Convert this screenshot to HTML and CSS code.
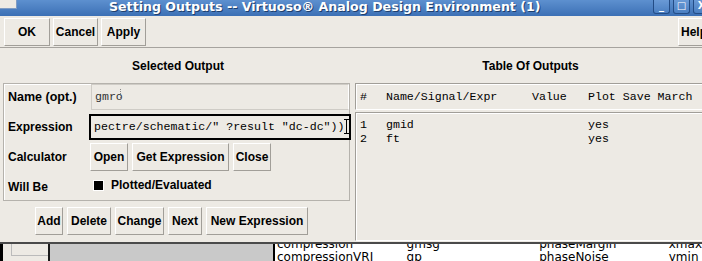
FILE: index.html
```html
<!DOCTYPE html>
<html lang="en">
<head>
    <meta charset="UTF-8">
    <title>Setting Outputs</title>
    <link rel="stylesheet" href="styles.css">
</head>
<body>
    <div class="window">
        <div class="titlebar">
            <span class="menu-box"></span>
            <span class="title">Setting Outputs -- Virtuoso&reg; Analog Design Environment (1)</span>
            <div class="wm-buttons">
                <span class="wm-btn">_</span>
                <span class="wm-btn">&#9633;</span>
                <span class="wm-btn">X</span>
            </div>
        </div>

        <div class="toolbar">
            <button class="btn tb-ok">OK</button>
            <button class="btn tb-cancel">Cancel</button>
            <button class="btn tb-apply">Apply</button>
            <button class="btn tb-help">Help</button>
        </div>

        <div class="main">
            <div class="left">
                <div class="heading">Selected Output</div>
                <div class="frame">
                    <div class="row row-name">
                        <label class="lbl">Name (opt.)</label>
                        <div class="field name-field">gmro<span class="mouse-beam"></span></div>
                    </div>
                    <div class="row row-expr">
                        <label class="lbl">Expression</label>
                        <div class="field expr-field">pectre/schematic/" ?result "dc-dc"))<span class="caret"></span></div>
                    </div>
                    <div class="row row-calc">
                        <label class="lbl">Calculator</label>
                        <div class="btn-group">
                            <button class="btn w38">Open</button>
                            <button class="btn w97">Get Expression</button>
                            <button class="btn w38">Close</button>
                        </div>
                    </div>
                    <div class="row row-will">
                        <label class="lbl">Will Be</label>
                        <div class="check"><span class="box"></span>Plotted/Evaluated</div>
                    </div>
                </div>
                <div class="actions">
                    <button class="btn w28">Add</button>
                    <button class="btn w44">Delete</button>
                    <button class="btn w49">Change</button>
                    <button class="btn w34">Next</button>
                    <button class="btn w102">New Expression</button>
                </div>
            </div>

            <div class="right">
                <div class="heading">Table Of Outputs</div>
                <div class="tbl-head">
                    <span class="c-num">#</span><span class="c-name">Name/Signal/Expr</span><span class="c-val">Value</span><span class="c-plot">Plot Save March</span>
                </div>
                <div class="tbl-body">
                    <div class="tr"><span class="c-num">1</span><span class="c-name">gmid</span><span class="c-val"></span><span class="c-plot">yes</span></div>
                    <div class="tr"><span class="c-num">2</span><span class="c-name">ft</span><span class="c-val"></span><span class="c-plot">yes</span></div>
                </div>
            </div>
        </div>

        <div class="behind">
            <div class="bh-edge"></div>
            <div class="bh-panel"><div class="bh-inner"></div></div>
            <div class="bh-gray"></div>
            <div class="bh-list">
                <div class="bh-col c1"><span>compression</span><span>compressionVRI</span></div>
                <div class="bh-col c2"><span>gmsg</span><span>gp</span></div>
                <div class="bh-col c3"><span>phaseMargin</span><span>phaseNoise</span></div>
                <div class="bh-col c4"><span>xmax</span><span>ymin</span></div>
            </div>
        </div>
    </div>
</body>
</html>
```

FILE: styles.css
```css
body {
    margin: 0;
    width: 702px;
    height: 261px;
    overflow: hidden;
    background-color: #edeae4;
    font-family: "Liberation Sans", Arial, sans-serif;
    font-size: 12px;
    font-weight: bold;
    color: #000;
}
.window {
    width: 702px;
    height: 261px;
    display: flex;
    flex-direction: column;
}
/* title bar */
.titlebar {
    height: 16px;
    flex: none;
    display: flex;
    align-items: flex-start;
    background: linear-gradient(#5d90cf, #3c70b5);
}
.menu-box {
    width: 16px;
    height: 8px;
    background-color: #edeae4;
    border-right: 1px solid #7f9cc4;
    border-bottom: 1px solid #7f9cc4;
    flex: none;
}
.title {
    margin-left: 92px;
    font-family: "DejaVu Sans", sans-serif;
    font-size: 12.6px;
    font-weight: bold;
    color: #fff;
    line-height: 13px;
    text-shadow: 1px 1px 0 #1f3f6c;
    white-space: nowrap;
}
.wm-buttons {
    margin-left: auto;
    display: flex;
    gap: 3px;
    margin-right: -8px;
}
.wm-btn {
    width: 15px;
    height: 13px;
    border: 1px solid #234c85;
    border-top: none;
    border-radius: 0 0 3px 3px;
    background: linear-gradient(#6a9ad6, #4a7fc2);
    color: #fff;
    font-family: "DejaVu Sans", sans-serif;
    font-size: 10px;
    line-height: 12px;
    text-align: center;
}

/* buttons */
.btn {
    font-family: "Liberation Sans", Arial, sans-serif;
    font-size: 12px;
    font-weight: bold;
    color: #000;
    background-color: #edeae4;
    height: 28px;
    padding: 0;
    border: 1px solid;
    border-color: #fff #a19e98 #a19e98 #fff;
    margin: 0;
    text-align: center;
    white-space: nowrap;
}
.w28 { width: 28px; }
.w34 { width: 34px; }
.w38 { width: 38px; }
.w44 { width: 44px; }
.w49 { width: 49px; }
.w97 { width: 97px; }
.w102 { width: 102px; }
.toolbar {
    height: 31px;
    flex: none;
    display: flex;
    align-items: center;
    padding-left: 4px;
    gap: 3px;
    border-bottom: 1px solid #a6a39e;
}
.tb-ok { width: 46px; }
.tb-cancel { width: 45px; }
.tb-apply { width: 45px; }
.tb-help { margin-left: auto; margin-right: -24px; width: 48px; text-align: left; padding-left: 2px; }

/* main area */
.main {
    height: 194px;
    flex: none;
    display: flex;
}
.heading {
    height: 35px;
    line-height: 36px;
    text-align: center;
}
.left {
    width: 352px;
    flex: none;
}
.left .heading {
    padding-left: 4px;
}
.frame {
    margin-left: 3px;
    width: 345px;
    height: 116px;
    border: 1px solid #b5b2ac;
    box-shadow: inset 1px 1px 0 #fff;
}
.row {
    display: flex;
    align-items: center;
}
.lbl {
    width: 85px;
    flex: none;
    padding-left: 4px;
    box-sizing: border-box;
}
.row-name {
    height: 26px;
}
.row-name .lbl { font-size: 12.5px; }
.field {
    font-family: "Liberation Mono", "DejaVu Sans Mono", monospace;
    font-weight: normal;
    font-size: 11.6px;
    white-space: nowrap;
    overflow: hidden;
    box-sizing: border-box;
}
.name-field {
    margin-left: 2px;
    width: 260px;
    height: 26px;
    line-height: 24px;
    padding-left: 3px;
    border: 1px solid #cfccc6;
    border-right-color: #fff;
    color: #333;
}
/* mouse pointer I-beam resting on the name */
.mouse-beam {
    display: inline-block;
    width: 1px;
    height: 9px;
    margin-left: -3px;
    vertical-align: 2px;
    border-left: 1px dotted #888;
}
.row-expr {
    height: 26px;
    margin-top: 4px;
}
.expr-field {
    width: 262px;
    height: 26px;
    line-height: 22px;
    padding-left: 3px;
    border: 2px solid #000;
    margin-right: -2px;
}
/* text cursor: I-beam */
.caret {
    display: inline-block;
    width: 5px;
    height: 15px;
    border-top: 1px solid #000;
    border-bottom: 1px solid #000;
    background: linear-gradient(90deg, transparent 2px, #000 2px, #000 3px, transparent 3px);
    box-sizing: border-box;
    margin-left: 0;
    vertical-align: -4px;
}
.row-calc {
    height: 28px;
    margin-top: 3px;
}
.btn-group {
    display: flex;
    gap: 4px;
    margin-left: 1px;
}
.row-will {
    height: 20px;
    margin-top: 4px;
}
.row-will .lbl { padding-top: 4px; }
.check {
    display: flex;
    align-items: center;
    margin-left: 4px;
}
.box {
    width: 9px;
    height: 9px;
    background-color: #000;
    border: 1px solid #fff;
    margin-right: 7px;
}
.actions {
    display: flex;
    gap: 4px;
    margin-top: 6px;
    padding-left: 35px;
}

/* table */
.right {
    flex: 1;
    display: flex;
    flex-direction: column;
}
.right .heading {
    padding-left: 7px;
}
.tbl-head, .tbl-body {
    margin-left: 3px;
    font-family: "Liberation Mono", "DejaVu Sans Mono", monospace;
    font-weight: normal;
    font-size: 11.6px;
    border-left: 1px solid #a19e98;
    border-top: 1px solid #a19e98;
    box-shadow: inset 1px 1px 0 #fff;
}
.tbl-head {
    height: 25px;
    line-height: 25px;
    padding-left: 4px;
    border-bottom: 1px solid #fff;
}
.tbl-body {
    margin-top: 2px;
    height: 122px;
    padding-left: 4px;
    padding-top: 5px;
    border-bottom: 1px solid #fff;
}
.tr {
    height: 14px;
    line-height: 14px;
}
.c-num { display: inline-block; width: 26px; }
.c-name { display: inline-block; width: 146px; }
.c-val { display: inline-block; width: 56px; }
.c-plot { white-space: nowrap; }

/* window behind */
.behind {
    flex: 1;
    display: flex;
    border-top: 2px solid #4a4a4a;
}
.bh-edge {
    width: 3px;
    background-color: #000;
}
.bh-panel {
    width: 45px;
    background-color: #edeae4;
    border-right: 2px solid #1a1a1a;
}
.bh-inner {
    margin-left: 8px;
    height: 11px;
    border-left: 1px solid #bbb;
    border-bottom: 1px solid #bbb;
}
.bh-gray {
    width: 223px;
    background-color: #c9c9c9;
    border-right: 2px solid #000;
}
.bh-list {
    flex: 1;
    background-color: #fff;
    display: flex;
    font-family: "DejaVu Sans", sans-serif;
    font-weight: normal;
    font-size: 12px;
    color: #000;
    overflow: hidden;
}
.bh-col {
    display: flex;
    flex-direction: column;
    margin-top: -6px;
    line-height: 13px;
    white-space: nowrap;
}
.c1 { width: 130px; padding-left: 2px; }
.c2 { width: 133px; }
.c3 { width: 130px; }
```
